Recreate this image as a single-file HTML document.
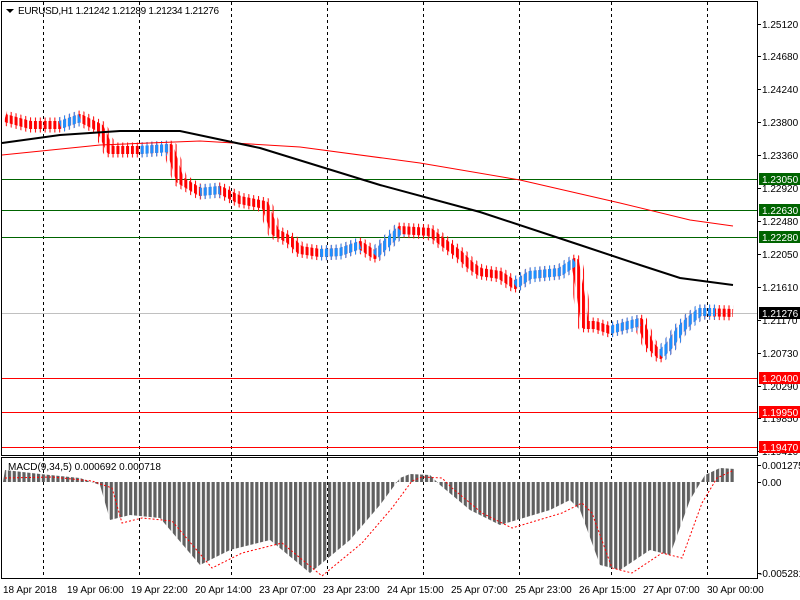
<!DOCTYPE html>
<html><head><meta charset="utf-8"><style>
body{margin:0;width:800px;height:600px;background:#fff;overflow:hidden}
svg{display:block}
text{font-family:"Liberation Sans",sans-serif;font-size:10px;fill:#000}
.w{fill:#fff}
</style></head><body>
<svg width="800" height="600" xmlns="http://www.w3.org/2000/svg">
<defs>
<pattern id="pr" x="0" y="0" width="4.85" height="10" patternUnits="userSpaceOnUse"><rect x="0" y="0" width="3" height="10" fill="#f00"/></pattern>
<pattern id="pb" x="0" y="0" width="4.85" height="10" patternUnits="userSpaceOnUse"><rect x="0" y="0" width="3" height="10" fill="#1e90ff"/></pattern>
<pattern id="wr" x="0" y="0" width="4.85" height="10" patternUnits="userSpaceOnUse"><rect x="1" y="0" width="1" height="10" fill="#f00"/></pattern>
<pattern id="wb" x="0" y="0" width="4.85" height="10" patternUnits="userSpaceOnUse"><rect x="1" y="0" width="1" height="10" fill="#1e90ff"/></pattern>
<pattern id="pg" x="3" y="0" width="4.85" height="10" patternUnits="userSpaceOnUse"><rect x="0" y="0" width="3.2" height="10" fill="#606060"/></pattern>
</defs>
<rect x="0" y="0" width="800" height="600" fill="#fff"/>
<g stroke="#000" stroke-dasharray="3,3" stroke-width="1">
<line x1="43.5" y1="2" x2="43.5" y2="578"/><line x1="139.5" y1="2" x2="139.5" y2="578"/>
<line x1="231.5" y1="2" x2="231.5" y2="578"/><line x1="327.5" y1="2" x2="327.5" y2="578"/>
<line x1="423.5" y1="2" x2="423.5" y2="578"/><line x1="519.5" y1="2" x2="519.5" y2="578"/>
<line x1="611.5" y1="2" x2="611.5" y2="578"/><line x1="707.5" y1="2" x2="707.5" y2="578"/>
</g>
<g stroke-width="1">
<line x1="2" y1="179.5" x2="757" y2="179.5" stroke="#006400"/>
<line x1="2" y1="210.5" x2="757" y2="210.5" stroke="#006400"/>
<line x1="2" y1="237.5" x2="757" y2="237.5" stroke="#006400"/>
<line x1="2" y1="313.5" x2="757" y2="313.5" stroke="#c0c0c0"/>
<line x1="2" y1="378.5" x2="757" y2="378.5" stroke="#f00"/>
<line x1="2" y1="412.5" x2="757" y2="412.5" stroke="#f00"/>
<line x1="2" y1="447.5" x2="757" y2="447.5" stroke="#f00"/>
</g>
<!-- wicks -->
<polyline fill="none" stroke="url(#wr)" stroke-width="15" stroke-linejoin="round" points="5,118 30,125 60,125 80,118 100,128 110,150 140,150 170,148 180,180 200,192 220,190 240,200 265,205 275,232 290,240 300,250 320,253 340,252 360,245 375,255 390,240 400,230 430,232 440,240 460,255 470,265 480,272 500,275 515,285 530,275 560,272 575,262 580,290 585,325 595,325 610,330 640,322 650,345 660,355 670,345 680,330 690,320 700,312 733,313"/>
<g fill="none" stroke="url(#wb)" stroke-width="15">
<polyline points="60,125 80,118"/><polyline points="140,150 170,148"/><polyline points="200,192 220,190"/>
<polyline points="320,253 340,252 360,245"/><polyline points="375,255 390,240 400,230"/>
<polyline points="515,285 530,275 560,272 575,262"/><polyline points="610,330 640,322"/>
<polyline points="660,355 670,345 680,330 690,320 700,312 715,312"/>
</g>
<!-- bodies -->
<polyline fill="none" stroke="url(#pr)" stroke-width="8" stroke-linejoin="round" points="5,118 30,125 60,125 80,118 100,128 110,150 140,150 170,148 180,180 200,192 220,190 240,200 265,205 275,232 290,240 300,250 320,253 340,252 360,245 375,255 390,240 400,230 430,232 440,240 460,255 470,265 480,272 500,275 515,285 530,275 560,272 575,262 580,290 585,325 595,325 610,330 640,322 650,345 660,355 670,345 680,330 690,320 700,312 733,313"/>
<g fill="none" stroke="url(#pb)" stroke-width="8">
<polyline points="60,125 80,118"/><polyline points="140,150 170,148"/><polyline points="200,192 220,190"/>
<polyline points="320,253 340,252 360,245"/><polyline points="375,255 390,240 400,230"/>
<polyline points="515,285 530,275 560,272 575,262"/><polyline points="610,330 640,322"/>
<polyline points="660,355 670,345 680,330 690,320 700,312 715,312"/>
</g>
<polyline fill="none" stroke="#f00" stroke-width="1" points="2,155 100,145 200,141 300,147 420,163 520,180 620,203 690,220 733,226"/>
<polyline fill="none" stroke="#000" stroke-width="2" points="2,143 60,135 120,131 180,131 260,148 380,185 480,212 580,245 640,265 680,278 733,285"/>
<!-- MACD -->
<polygon fill="url(#pg)" points="3,482 5,470 40,474 80,478 100,485 110,520 130,515 160,518 200,565 230,550 270,540 310,573 350,540 380,505 400,478 410,474 430,475 440,485 470,510 500,525 550,510 570,500 580,510 600,565 620,570 650,550 670,555 690,500 705,475 720,468 735,469 735,482"/>
<polyline fill="none" stroke="#f00" stroke-width="1" stroke-dasharray="2,2" points="5,478 52,477 92,481 112,488 122,523 142,518 172,521 212,568 242,553 282,543 322,576 362,543 392,508 412,481 422,477 442,478 452,488 482,513 512,528 562,513 582,503 592,513 612,568 632,573 662,553 682,558 702,503 717,478 732,471"/>
<g fill="none" stroke="#000" stroke-width="1">
<rect x="1.5" y="1.5" width="756" height="454"/>
<rect x="1.5" y="457.5" width="756" height="121"/>
</g>
<polygon points="6,9 14,9 10,13" fill="#000"/>
<text x="18" y="14" textLength="201">EURUSD,H1  1.21242 1.21289 1.21234 1.21276</text>
<text x="8" y="470">MACD(9,34,5) 0.000692 0.000718</text>
<g>
<text x="3" y="593">18 Apr 2018</text><text x="67" y="593">19 Apr 06:00</text>
<text x="131" y="593">19 Apr 22:00</text><text x="195" y="593">20 Apr 14:00</text>
<text x="259" y="593">23 Apr 07:00</text><text x="323" y="593">23 Apr 23:00</text>
<text x="387" y="593">24 Apr 15:00</text><text x="451" y="593">25 Apr 07:00</text>
<text x="515" y="593">25 Apr 23:00</text><text x="579" y="593">26 Apr 15:00</text>
<text x="643" y="593">27 Apr 07:00</text><text x="707" y="593">30 Apr 00:00</text>
</g>
<g stroke="#000">
<line x1="757" x2="761" y1="24.5" y2="24.5"/><line x1="757" x2="761" y1="56.5" y2="56.5"/><line x1="757" x2="761" y1="89.5" y2="89.5"/><line x1="757" x2="761" y1="122.5" y2="122.5"/><line x1="757" x2="761" y1="155.5" y2="155.5"/><line x1="757" x2="761" y1="188.5" y2="188.5"/><line x1="757" x2="761" y1="221.5" y2="221.5"/><line x1="757" x2="761" y1="254.5" y2="254.5"/><line x1="757" x2="761" y1="287.5" y2="287.5"/><line x1="757" x2="761" y1="320.5" y2="320.5"/><line x1="757" x2="761" y1="353.5" y2="353.5"/><line x1="757" x2="761" y1="386.5" y2="386.5"/><line x1="757" x2="761" y1="418.5" y2="418.5"/><line x1="757" x2="761" y1="451.5" y2="451.5"/><line x1="757" x2="761" y1="465.5" y2="465.5"/><line x1="757" x2="761" y1="482.5" y2="482.5"/><line x1="757" x2="761" y1="573.5" y2="573.5"/>
</g>
<g>
<text x="762" y="28">1.25120</text><text x="762" y="60">1.24680</text><text x="762" y="93">1.24240</text><text x="762" y="126">1.23800</text><text x="762" y="159">1.23360</text><text x="762" y="192">1.22920</text><text x="762" y="225">1.22480</text><text x="762" y="258">1.22050</text><text x="762" y="291">1.21610</text><text x="762" y="324">1.21170</text><text x="762" y="357">1.20730</text><text x="762" y="390">1.20290</text><text x="762" y="422">1.19850</text><text x="762" y="455">1.19410</text><text x="762" y="469">0.001275</text><text x="762" y="486">0.00</text><text x="759" y="577">-0.005281</text>
</g>
<rect x="759" y="173" width="41" height="12" fill="#006400"/><text class="w" x="762" y="183">1.23050</text>
<rect x="759" y="204" width="41" height="12" fill="#006400"/><text class="w" x="762" y="214">1.22630</text>
<rect x="759" y="231" width="41" height="12" fill="#006400"/><text class="w" x="762" y="241">1.22280</text>
<rect x="759" y="307" width="41" height="12" fill="#000"/><text class="w" x="762" y="317">1.21276</text>
<rect x="759" y="372" width="41" height="12" fill="#f00"/><text class="w" x="762" y="382">1.20400</text>
<rect x="759" y="406" width="41" height="12" fill="#f00"/><text class="w" x="762" y="416">1.19950</text>
<rect x="759" y="441" width="41" height="12" fill="#f00"/><text class="w" x="762" y="451">1.19470</text>
</svg>
</body></html>
